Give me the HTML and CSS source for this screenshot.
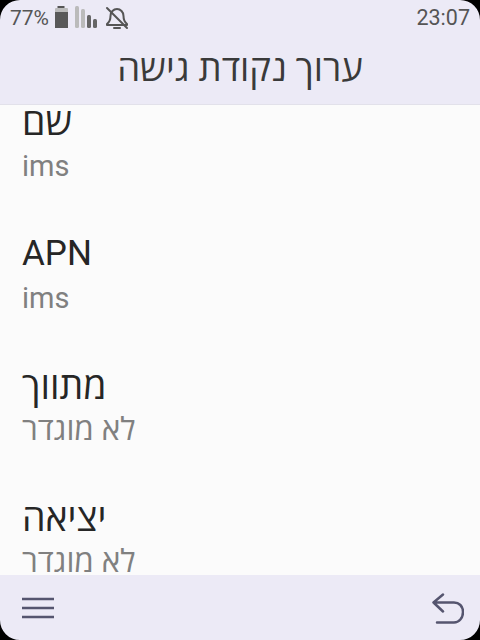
FILE: index.html
```html
<!DOCTYPE html>
<html lang="he">
<head>
<meta charset="utf-8">
<title>ערוך נקודת גישה</title>
<link rel="stylesheet" href="styles.css">
</head>
<body>
<div class="screen">
  <header class="head">
    <div class="status">
      <div class="status-left">
        <span class="pct">77%</span>
        <svg class="ico" width="80" height="24" viewBox="0 0 80 24" aria-hidden="true">
          <rect x="3.500" y="0" width="7" height="3" fill="#555"/>
          <rect x="1" y="2" width="13" height="20" rx="1" fill="#bbb"/>
          <rect x="1" y="6" width="13" height="16" fill="#595959"/>
          <rect x="21" y="0" width="4" height="22" rx="1.500" fill="#bbb"/>
          <rect x="27" y="3" width="4" height="19" rx="1.500" fill="#bbb"/>
          <rect x="33" y="9" width="4" height="13" rx="1.500" fill="#666"/>
          <rect x="39" y="13" width="4" height="9" rx="1.500" fill="#666"/>
          <g fill="none" stroke="#555" stroke-width="2" stroke-linejoin="round" stroke-linecap="round">
            <path d="M53 18c2.500-2 3.500-4 3.500-8 0-4 3-7 6.500-7s6.500 3 6.500 7c0 4 1 6 3.500 8v1H53z"/>
            <path d="M60 22h6"/>
            <path d="M53 2l20 20"/>
          </g>
        </svg>
      </div>
      <span class="time">23:07</span>
    </div>
    <h1 class="title">ערוך נקודת גישה</h1>
  </header>
  <main class="list">
    <div class="item first"><div class="label he">שם</div><div class="value">ims</div></div>
    <div class="item"><div class="label">APN</div><div class="value">ims</div></div>
    <div class="item"><div class="label he">מתווך</div><div class="value he">לא מוגדר</div></div>
    <div class="item"><div class="label he">יציאה</div><div class="value he">לא מוגדר</div></div>
  </main>
  <footer class="foot">
    <svg width="32" height="24" viewBox="0 0 32 24" aria-hidden="true">
      <path d="M0 3h32M0 12h32M0 21h32" stroke="#55556f" stroke-width="2.400" fill="none"/>
    </svg>
    <svg width="32" height="32" viewBox="0 0 32 32" aria-hidden="true">
      <path d="M11 2.500L1.500 10.500l9.500 9M1.500 10.500H22c5 0 9 3.500 9 9.500s-4 10.500-9 10.500H5" stroke="#55556f" stroke-width="2.500" fill="none" stroke-linecap="round" stroke-linejoin="round"/>
    </svg>
  </footer>
  <i class="corner tl"></i><i class="corner tr"></i><i class="corner bl"></i><i class="corner br"></i>
</div>
</body>
</html>
```
FILE: styles.css
```css
html, body { margin: 0; padding: 0; background: #000; }
.screen {
  position: relative; width: 480px; height: 640px; overflow: hidden;
  display: flex; flex-direction: column; background: #fbfbfb;
  font-family: Roboto, "Open Sans", sans-serif;
}
.head { height: 105px; background: #eceaf6; border-bottom: 1px solid #e2e1ea; box-sizing: border-box; flex: none; }
.status { height: 35px; display: flex; justify-content: space-between; align-items: center; padding: 0 10px; color: #555; }
.status-left { display: flex; align-items: center; gap: 5px; font-size: 21px; }
.time { font-size: 21.500px; }
.ico { display: block; }
.title { margin: 0; text-align: center; font-weight: 400; font-size: 36.500px; line-height: 68px; color: #3a3a3a; direction: rtl; }
.list { flex: 1; overflow: hidden; padding: 0 21px 0 22px; min-height: 0; }
.item { height: 132px; }
.item.first { margin-top: -5px; }
.label { font-size: 35px; line-height: 44px; color: #262626; direction: rtl; text-align: left; }
.label.he { font-size: 37.500px; }
.value { font-size: 29px; line-height: 44px; color: #808080; direction: rtl; text-align: left; }
.value.he { font-size: 31.500px; }
.foot { height: 65px; flex: none; background: #eceaf6; display: flex; justify-content: space-between; align-items: center; padding: 0 16px 0 22px; }
.corner { position: absolute; width: 20px; height: 20px; background: #000; }
.tl { left: 0; top: 0; clip-path: path("M0 0H20A20 20 0 0 0 0 20Z"); }
.tr { right: 0; top: 0; clip-path: path("M0 0H20V20A20 20 0 0 0 0 0Z"); }
.bl { left: 0; bottom: 0; clip-path: path("M0 0A20 20 0 0 0 20 20H0Z"); }
.br { right: 0; bottom: 0; clip-path: path("M20 0A20 20 0 0 1 0 20H20Z"); }
```
